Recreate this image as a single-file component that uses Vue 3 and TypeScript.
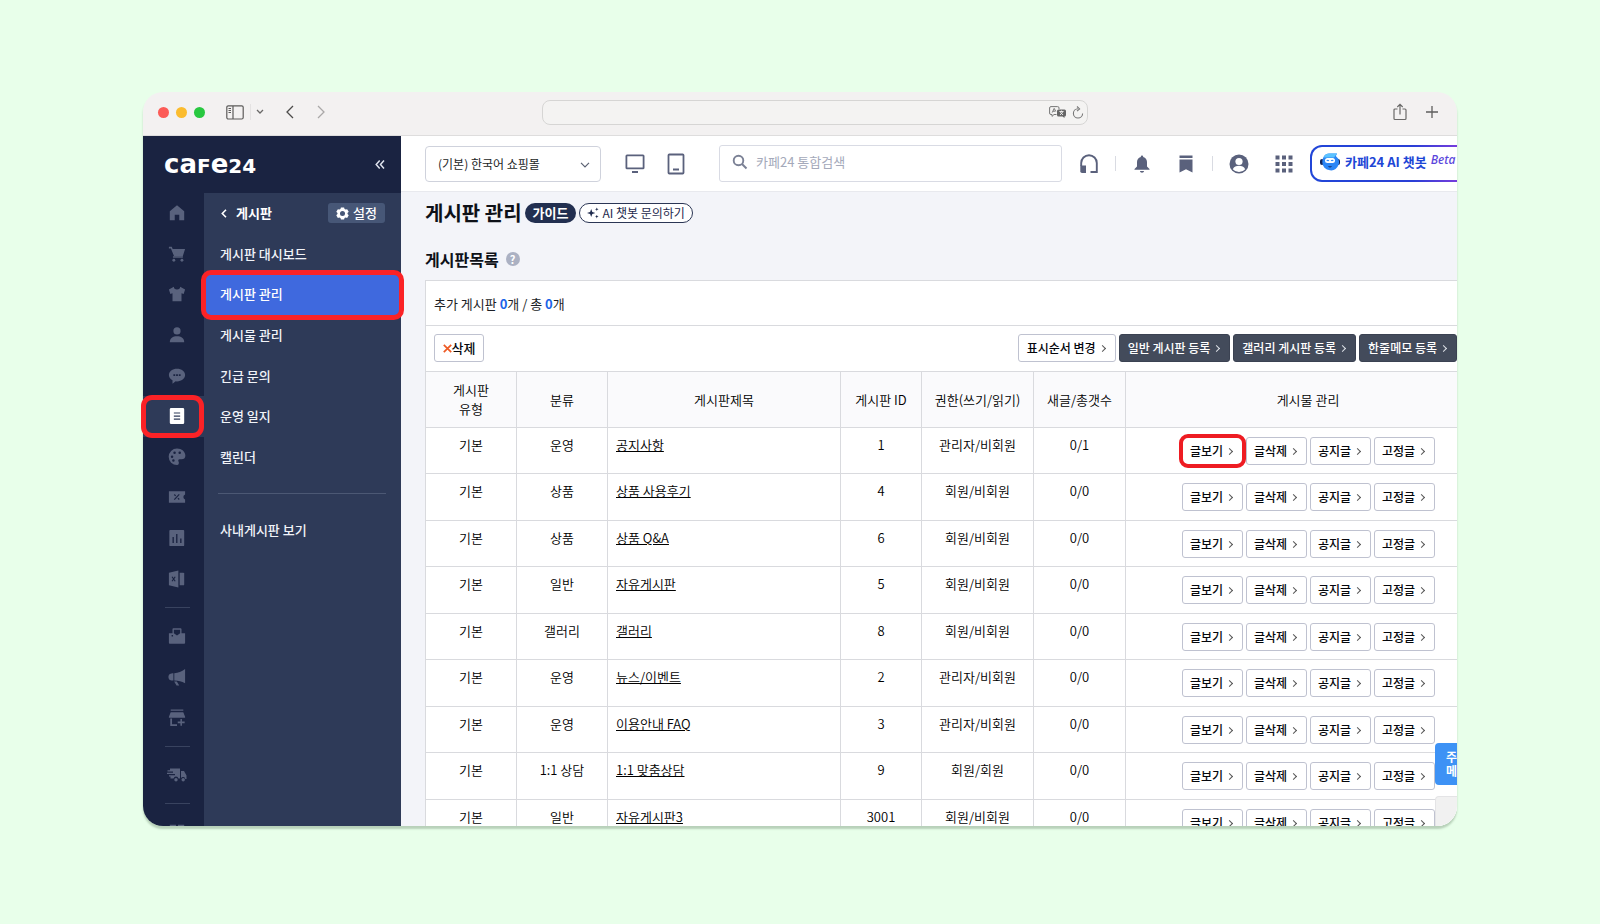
<script setup lang="ts">
import { ref } from 'vue'

interface Board {
  id: string
  kind: string
  group: string
  title: string
  auth: string
  count: string
}

const railMain = ['home', 'cart', 'shirt', 'user', 'chat', 'board', 'palette', 'coupon', 'chart', 'excel']
const railNames: Record<string, string> = {
  home: '홈', cart: '주문', shirt: '상품', user: '고객', chat: '메시지', board: '게시판',
  palette: '디자인', coupon: '프로모션', chart: '통계', excel: '엑셀', bag: '통합', mega: '마케팅',
  store: '스토어', truck: '배송', apps: '앱',
}
const railExtra = ['bag', 'mega', 'store']
const menu = ['게시판 대시보드', '게시판 관리', '게시물 관리', '긴급 문의', '운영 일지', '캘린더']
const activeMenu = '게시판 관리'
const actions = ['글보기', '글삭제', '공지글', '고정글']
const registers = ['일반 게시판 등록', '갤러리 게시판 등록', '한줄메모 등록']
const keyword = ref('')

const boards: Board[] = [
  { id: '1', kind: '기본', group: '운영', title: '공지사항', auth: '관리자/비회원', count: '0/1' },
  { id: '4', kind: '기본', group: '상품', title: '상품 사용후기', auth: '회원/비회원', count: '0/0' },
  { id: '6', kind: '기본', group: '상품', title: '상품 Q&A', auth: '회원/비회원', count: '0/0' },
  { id: '5', kind: '기본', group: '일반', title: '자유게시판', auth: '회원/비회원', count: '0/0' },
  { id: '8', kind: '기본', group: '갤러리', title: '갤러리', auth: '회원/비회원', count: '0/0' },
  { id: '2', kind: '기본', group: '운영', title: '뉴스/이벤트', auth: '관리자/비회원', count: '0/0' },
  { id: '3', kind: '기본', group: '운영', title: '이용안내 FAQ', auth: '관리자/비회원', count: '0/0' },
  { id: '9', kind: '기본', group: '1:1 상담', title: '1:1 맞춤상담', auth: '회원/회원', count: '0/0' },
  { id: '3001', kind: '기본', group: '일반', title: '자유게시판3', auth: '회원/비회원', count: '0/0' },
]

const glyphs: Record<string, string> = {
  home: '<path d="M10 1.5 18 8v10h-5.5v-6h-5v6H2V8z"/>',
  cart: '<path d="M1 2h3.2l1 2.4H19l-2.6 8.1H6.8L3.2 4H1z"/><path d="M5.5 12.5h11v1.6h-11z"/><circle cx="6.5" cy="17" r="1.6"/><circle cx="15.5" cy="17" r="1.6"/>',
  shirt: '<path d="M6.5 2 1 5l1.6 5L5 9.2V18h10V9.200l2.400.800L19 5l-5.500-3a3.500 3 0 0 1-7 0z"/>',
  user: '<circle cx="10" cy="5.500" r="4"/><path d="M2 18c0-4.500 3.500-6.500 8-6.500s8 2 8 6.500z"/>',
  chat: '<path fill-rule="evenodd" d="M10 2c5 0 9 3 9 7s-4 7-9 7l-1.500-.1L5 18.500v-3.700C2.500 13.600 1 11.500 1 9c0-4 4-7 9-7zM6 8v2h2V8zm3 0v2h2V8zm3 0v2h2V8z"/>',
  board: '<path fill-rule="evenodd" d="M3.500 1h13A1.500 1.500 0 0 1 18 2.500v15a1.500 1.500 0 0 1-1.500 1.500h-13A1.500 1.500 0 0 1 2 17.500v-15A1.500 1.500 0 0 1 3.500 1zM6.500 6v1.300h7V6zm0 3.400v1.300h7V9.400zm0 3.400v1.300h7v-1.300z"/>',
  palette: '<path fill-rule="evenodd" d="M10 .5c5.300 0 9.300 3.600 9.300 8 0 2.500-1.800 4-4.200 4h-2.200c-1.500 0-1.800 1.500-1.200 2.500.8 1.400.4 4-1.700 4a9.200 9.200 0 0 1 0-18.500zM4.500 8.200a1.400 1.400 0 1 0 0 2.800 1.400 1.400 0 0 0 0-2.800zM7.300 3.800a1.400 1.400 0 1 0 0 2.800 1.400 1.400 0 0 0 0-2.800zm5.700 0a1.400 1.400 0 1 0 0 2.800 1.400 1.400 0 0 0 0-2.800zM6 12.500a1.400 1.400 0 1 0 0 2.800 1.400 1.400 0 0 0 0-2.800z"/>',
  coupon: '<path d="M1 3.500h18v3.700a3 3 0 0 0 0 5.600v3.700H1z"/><g stroke="#1a2341" stroke-width="1.300" fill="none"><path d="m7 13 5.500-6M7 7.200l1.500 1.500M11 11.300l1.500 1.500"/></g>',
  chart: '<path fill-rule="evenodd" d="M2.500 1h14.500A1 1 0 0 1 18 2v16a1 1 0 0 1-1 1H2.500a1 1 0 0 1-1-1V2a1 1 0 0 1 1-1zM5 9v6.500h1.500V9zm4-3.500v10h1.500v-10zm4.500 5v5H15v-5z"/>',
  excel: '<path d="m1 3 10.500-2.500v19L1 17z"/><path d="M13 3h4a1 1 0 0 1 1 1v12a1 1 0 0 1-1 1h-4z"/><path d="m4.500 7.500 3.500 5m0-5-3.500 5" stroke="#1a2341" stroke-width="1.300"/>',
  bag: '<path fill-rule="evenodd" d="M6 1.500h8a1 1 0 0 1 1 1V7h4v10.500a1 1 0 0 1-1 1H2a1 1 0 0 1-1-1V7h4V2.500a1 1 0 0 1 1-1zM6.500 3v4L10 9.500 13.500 7V3zM4 9v1.600h1.600V9z"/>',
  mega: '<path d="M6 5.700v8.300c-3 0-5.500-1-5.500-4.100S3 5.700 6 5.700zM7 5.700c4.500-.200 8-1.700 12-4.700v16c-4-2-7-3-12-3zM6.800 15h3l2.700 4.500h-3z"/>',
  store: '<path d="M3 .500h14V2H3zM3 3.500h14l2 5v1.200H1V8.500zM2.500 10.500h2V17H10v2H2.500z"/><path d="M13.800 11h1.700v3H18.500v1.700h-3v3h-1.700v-3h-3v-1.700h3z"/>',
  truck: '<path d="M3 3.500h10v10h-1.500a2.600 2.600 0 0 0-5 0H3.500v-2H2v-1.200h6V9H0V7.800h6V6.500H.500V5.300H3zM14 6h3l2.500 4.500v3.500h-1.200a2.300 2.300 0 0 0-4.300-.700z"/><circle cx="9" cy="14.800" r="1.700"/><circle cx="16.200" cy="14.800" r="1.700"/>',
  apps: '<path d="M2 2h7v7H2zM11 2h7v7h-7z"/>',
}
</script>

<template>
  <div class="stage">
    <div class="frame">
      <div class="window">
        <header class="chrome">
          <div class="chrome-left">
            <span class="dot red"></span><span class="dot yellow"></span><span class="dot green"></span>
            <svg class="panes" width="18" height="15" viewBox="0 0 18 15" fill="none" stroke="#5c5b5a" stroke-width="1.200"><rect x=".8" y=".8" width="16.400" height="13.200" rx="1.500" /><path d="M7 1v13M2.500 3.500h2.500M2.500 5.500h2.500M2.500 7.500h2.500" /></svg>
            <span class="chrome-rule"></span>
            <svg class="mini" width="8" height="6" viewBox="0 0 8 6" fill="none" stroke="#6a6968" stroke-width="1.300"><path d="m1 1 3 3 3-3" /></svg>
            <button class="plain back" aria-label="뒤로"><svg width="9" height="14" viewBox="0 0 9 14" fill="none" stroke="#4c4b4a" stroke-width="1.300"><path d="M8 1 2 7l6 6" /></svg></button>
            <button class="plain next" aria-label="앞으로"><svg width="9" height="14" viewBox="0 0 9 14" fill="none" stroke="#aaa8a8" stroke-width="1.300"><path d="m1 1 6 6-6 6" /></svg></button>
          </div>
          <div class="address">
            <svg width="18" height="13" viewBox="0 0 18 13"><path d="M2 .6h6.500A1.400 1.400 0 0 1 10 2v1M7.500 8.500H5L3 10.400V8.500H2A1.400 1.400 0 0 1 .6 7V2A1.400 1.400 0 0 1 2 .6M3.200 6.600l2-4.200 1.600 3M4 5.200h2.300" fill="none" stroke="#777" /><path d="M9.500 3.500h6A1.500 1.500 0 0 1 17 5v4a1.500 1.500 0 0 1-1.500 1.500V12l-2-1.500h-4A1.500 1.500 0 0 1 8 9V5a1.500 1.500 0 0 1 1.500-1.500z" fill="#666" /><path d="M10.500 5.500h4M12.500 4.500v1M11 9l3-3.300M11 5.700 14 9" stroke="#f3f2f1" stroke-width=".9" /></svg>
            <svg width="12" height="13" viewBox="0 0 12 13" fill="none" stroke="#777" stroke-width="1.100"><path d="M6 2.800a4.600 4.600 0 1 0 4.600 4.600M5 .5l2.600 2.400L5 5.200" /></svg>
          </div>
          <div class="chrome-right">
            <button class="plain" aria-label="공유"><svg width="14" height="18" viewBox="0 0 14 18" fill="none" stroke="#6a6968" stroke-width="1.200"><path d="M4.500 6H2A1 1 0 0 0 1 7v8.500a1 1 0 0 0 1 1h10a1 1 0 0 0 1-1V7a1 1 0 0 0-1-1H9.500M7 11.500V1.500M4.300 4 7 1.300 9.700 4" /></svg></button>
            <button class="plain" aria-label="새 탭"><svg width="12" height="12" viewBox="0 0 12 12" stroke="#5f5e5d" stroke-width="1.300"><path d="M6 0v12M0 6h12" /></svg></button>
          </div>
        </header>

        <div class="app">
          <aside class="side">
            <div class="brand">
              <a class="logo" href="#"><span>ca</span><span class="low">f</span><span>e</span><span class="low">24</span></a>
              <button class="plain" aria-label="메뉴 접기"><svg width="10" height="9" viewBox="0 0 10 9" fill="none" stroke="#dfe3ee" stroke-width="1.500"><path d="M4.700.6 1.200 4.500l3.500 3.900M9 .6 5.500 4.500 9 8.400" /></svg></button>
            </div>
            <div class="side-body">
              <nav class="rail" aria-label="주 메뉴">
                <div class="rail-ten">
                  <a v-for="n in railMain" :key="n" href="#" :class="{ on: n === 'board' }" :aria-label="railNames[n]"><svg width="18" height="18" viewBox="0 0 20 20" fill="currentColor" v-html="glyphs[n]"></svg></a>
                </div>
                <hr />
                <div class="rail-three">
                  <a v-for="n in railExtra" :key="n" href="#" :aria-label="railNames[n]"><svg width="18" height="18" viewBox="0 0 20 20" fill="currentColor" v-html="glyphs[n]"></svg></a>
                </div>
                <hr />
                <a class="solo" href="#" aria-label="배송"><svg width="20" height="20" viewBox="0 0 20 20" fill="currentColor" v-html="glyphs.truck"></svg></a>
                <hr />
                <a class="solo" href="#" aria-label="앱"><svg width="18" height="18" viewBox="0 0 20 20" fill="currentColor" v-html="glyphs.apps"></svg></a>
              </nav>
              <nav class="sub" aria-label="게시판">
                <div class="sub-list">
                  <div class="sub-head">
                    <a href="#"><svg width="6" height="9" viewBox="0 0 6 9" fill="none" stroke="#fff" stroke-width="1.600"><path d="M5 .8 1.300 4.500 5 8.200" /></svg>게시판</a>
                    <button class="setting"><svg width="13" height="13" viewBox="0 0 14 14"><path fill="#fff" fill-rule="evenodd" d="M5.300.5h3.400l.5 1.700 1.100.6 1.700-.5 1.700 2.900-1.300 1.300v1.100l1.300 1.300-1.700 2.900-1.700-.5-1.100.6-.5 1.600H5.300l-.5-1.600-1.100-.6-1.700.5L.3 8.900l1.300-1.300V6.500L.3 5.200 2 2.300l1.700.5 1.100-.6zM7 4.300a2.700 2.700 0 1 0 0 5.400 2.700 2.700 0 0 0 0-5.400z" /></svg>설정</button>
                  </div>
                  <a v-for="m in menu" :key="m" href="#" :class="{ current: m === activeMenu }">{{ m }}</a>
                </div>
                <hr />
                <a href="#" class="inner">사내게시판 보기</a>
              </nav>
            </div>
          </aside>

          <main class="main">
            <div class="topbar">
              <div class="mall">
                <select aria-label="쇼핑몰 선택"><option>(기본) 한국어 쇼핑몰</option></select>
                <svg width="10" height="6" viewBox="0 0 10 6" fill="none" stroke="#5c6273" stroke-width="1.200"><path d="m1 .8 4 4 4-4" /></svg>
              </div>
              <button class="plain pc" aria-label="PC 쇼핑몰"><svg width="20" height="20" viewBox="0 0 20 20" fill="none" stroke="#5a617c" stroke-width="1.800"><rect x="1.400" y="1.400" width="17.200" height="13" rx=".6" /><path d="M7 18h6" /></svg></button>
              <button class="plain" aria-label="모바일 쇼핑몰"><svg width="18" height="22" viewBox="0 0 18 22" fill="none" stroke="#5a617c" stroke-width="1.800"><rect x="1.500" y="1.500" width="15" height="19" rx=".8" /><path d="M6 16.500h6" /></svg></button>
              <label class="search">
                <svg width="16" height="16" viewBox="0 0 16 16" fill="none" stroke="#7b8195" stroke-width="1.900"><circle cx="6.500" cy="6.500" r="4.800" /><path d="m10 10 4.500 4.500" /></svg>
                <input v-model="keyword" type="text" placeholder="카페24 통합검색" aria-label="카페24 통합검색" />
              </label>
              <div class="tools">
                <button class="plain" aria-label="고객센터"><svg width="20" height="20" viewBox="0 0 20 20"><path d="M2.200 12V9a7.800 7.800 0 0 1 15.600 0v9H11.500" fill="none" stroke="#5a617c" stroke-width="1.900" /><path d="M1.300 11.500H7V19H3a1.700 1.700 0 0 1-1.700-1.700z" fill="#5a617c" /></svg></button>
                <i class="bar"></i>
                <button class="plain bell" aria-label="알림"><svg width="16" height="18" viewBox="0 0 16 18" fill="#5a617c"><path d="M8 .5c.8 0 1.200.6 1.200 1.400C11.800 2.500 13 4.600 13 7v4.500l2.500 2.500v.8H.5V14L3 11.500V7c0-2.400 1.200-4.500 3.800-5.100C6.800 1.100 7.200.5 8 .5zM6 16h4c0 1-.9 1.700-2 1.700S6 17 6 16z" /></svg></button>
                <button class="plain mark" aria-label="즐겨찾기"><svg width="14" height="18" viewBox="0 0 14 18" fill="#5a617c"><path d="M.5.500h13V3H.5zM.5 4.500h13v13L7 14.200.5 17.500z" /></svg></button>
                <i class="bar"></i>
                <button class="plain me" aria-label="내 정보"><svg width="20" height="20" viewBox="0 0 20 20"><circle cx="10" cy="10" r="9.500" fill="#5a617c" /><circle cx="10" cy="7.500" r="3.600" fill="#fff" /><path d="M3.800 15.200c1.200-2.400 3.500-3.400 6.200-3.400s5 1 6.200 3.400A8 8 0 0 1 10 18a8 8 0 0 1-6.200-2.800z" fill="#fff" /></svg></button>
                <button class="plain nine" aria-label="전체 서비스"><svg width="18" height="18" viewBox="0 0 18 18" fill="#5a617c"><path d="M.5.500h4v4h-4zM7 .500h4v4H7zM13.500.500h4v4h-4zM.5 7h4v4h-4zM7 7h4v4H7zM13.500 7h4v4h-4zM.5 13.500h4v4h-4zM7 13.500h4v4H7zM13.500 13.500h4v4h-4z" /></svg></button>
              </div>
              <button class="bot">
                <svg width="20" height="18" viewBox="0 0 20 18"><rect x="0" y="6" width="4" height="6" rx="2" fill="#14265c" /><rect x="16" y="6" width="4" height="6" rx="2" fill="#14265c" /><path d="M5 2C8-.5 13 1 17 .5c-.5 1.500-1 2-1.200 2.500A8 8 0 0 1 10 17.300 8 8 0 0 1 2.300 9C2.300 6 3.500 3.500 5 2z" fill="#2c86f5" /><path d="M5 2C8-.5 13 1 17 .5L14 4.500H3.500z" fill="#5cc3ff" /><rect x="5" y="5" width="10" height="5" rx="2.500" fill="#fff" /><path d="M6.800 8q1-1.600 2 0M11.200 8q1-1.600 2 0" stroke="#2c86f5" stroke-width="1.100" fill="none" /><path d="M8.500 13.500q1.500 1 3 0" stroke="#14265c" fill="none" /></svg>
                <b>카페24 AI 챗봇</b><em>Beta</em>
              </button>
            </div>

            <div class="content">
              <div class="heading">
                <h1>게시판 관리</h1>
                <a class="guide" href="#">가이드</a>
                <a class="ask" href="#"><svg width="12" height="12" viewBox="0 0 12 12" fill="#1e2a4d"><path d="M4.200 2l1.100 2.900L8.400 6 5.300 7.100 4.200 10 3.100 7.100 0 6l3.100-1.100zM9.800.5l.5 1.300 1.300.5-1.300.5-.5 1.200-.5-1.200L8 2.300l1.300-.5zM9.800 7.800l.5 1.300 1.300.5-1.300.5-.5 1.300-.5-1.300L8 9.600l1.300-.5z" /></svg>AI 챗봇 문의하기</a>
              </div>
              <div class="caption">
                <h2>게시판목록</h2>
                <button class="help" aria-label="도움말">?</button>
              </div>

              <section class="panel">
                <p class="summary">추가 게시판 <b>0</b>개 / 총 <b>0</b>개</p>
                <div class="toolbar">
                  <button class="btn del"><svg width="9" height="9" viewBox="0 0 9 9" stroke="#ee5a24" stroke-width="1.700"><path d="m.8.8 7.400 7.400M8.200.8.8 8.200" /></svg>삭제</button>
                  <span class="spring"></span>
                  <button class="btn">표시순서 변경<i class="arrow"></i></button>
                  <button v-for="r in registers" :key="r" class="btn dark">{{ r }}<i class="arrow"></i></button>
                </div>
                <table>
                  <colgroup><col class="c1" /><col class="c1" /><col /><col class="c4" /><col class="c5" /><col class="c6" /><col class="c7" /></colgroup>
                  <thead>
                    <tr><th>게시판<br />유형</th><th>분류</th><th>게시판제목</th><th>게시판 ID</th><th>권한(쓰기/읽기)</th><th>새글/총갯수</th><th>게시물 관리</th></tr>
                  </thead>
                  <tbody>
                    <tr v-for="(b, i) in boards" :key="b.id">
                      <td>{{ b.kind }}</td><td>{{ b.group }}</td>
                      <td class="name"><a href="#">{{ b.title }}</a></td>
                      <td>{{ b.id }}</td><td>{{ b.auth }}</td><td>{{ b.count }}</td>
                      <td class="ops">
                        <div><button v-for="(a, j) in actions" :key="a" class="btn" :class="{ focus: i === 0 && j === 0 }">{{ a }}<i class="arrow"></i></button></div>
                      </td>
                    </tr>
                  </tbody>
                </table>
              </section>
            </div>
            <button class="float-menu">주<br />메</button>
            <div class="float-box"></div>
          </main>
        </div>
      </div>
      <span class="rail-ring"></span>
    </div>
  </div>
</template>

<style>
body { margin: 0; }
</style>

<style scoped>
.stage, .stage * { box-sizing: border-box; }
.stage {
  height: 100vh; display: flex; padding: 92px 143px 98px; background: #e8ffea; color: #1b1e26;
  font-family: "Noto Sans CJK KR", "Noto Sans", sans-serif; font-size: 13px; line-height: 20px; overflow: hidden;
}
button, input, select { font: inherit; color: inherit; }
button { padding: 0; cursor: pointer; white-space: nowrap; }
a { color: inherit; text-decoration: none; }
svg { display: block; flex: none; }
.plain { border: 0; background: none; display: flex; align-items: center; }
.frame { position: relative; flex: 1; min-width: 0; display: flex; }
.window {
  flex: 1; min-width: 0; display: flex; flex-direction: column; overflow: hidden; border-radius: 20px;
  box-shadow: 0 3px 2px rgba(60, 90, 60, .28);
}
.chrome {
  flex: none; height: 44px; display: grid; grid-template-columns: 399fr 546fr 369fr; align-items: center;
  padding-bottom: 3px; background: #f3f1f1; border-bottom: 1px solid #dedddd;
}
.chrome-left { display: flex; align-items: center; padding-left: 15px; }
.dot { width: 11px; height: 11px; border-radius: 50%; margin-right: 7px; }
.red { background: #fc5b57; }
.yellow { background: #fbbc2e; }
.green { background: #28c840; }
.panes { margin-left: 14px; }
.chrome-rule { width: 1px; height: 16px; margin-left: 6px; background: #e4e2e2; }
.mini { margin-left: 5px; }
.back { margin-left: 21px; }
.next { margin-left: 23px; }
.address {
  height: 25px; display: flex; align-items: center; justify-content: flex-end; gap: 5px; padding-right: 3px;
  border: 1px solid #d6d5d4; border-radius: 8px; background: #f4f3f2;
}
.chrome-right { display: flex; justify-content: flex-end; align-items: center; gap: 19px; padding-right: 19px; }

.app { flex: 1; min-height: 0; display: flex; }
.side { flex: none; width: 258px; display: flex; flex-direction: column; background: #1a2341; position: relative; z-index: 2; }
.brand { flex: none; height: 57px; display: flex; align-items: center; justify-content: space-between; padding: 0 16px 0 21px; }
.logo { display: flex; align-items: baseline; color: #fff; font: 700 26px/28px "DejaVu Sans", sans-serif; }
.logo .low { font-size: 20px; text-transform: uppercase; }
.side-body { flex: 1; min-height: 0; display: flex; }
.rail { flex: none; width: 61px; overflow: hidden; color: #59627d; }
.rail a { display: flex; align-items: center; justify-content: center; padding-left: 6px; }
.rail-ten { height: 406px; display: grid; grid-auto-rows: 1fr; }
.rail-three { height: 122px; display: grid; grid-auto-rows: 1fr; }
.rail .on { background: #2e3a58; color: #fff; }
.rail hr { width: 25px; height: 1px; margin: 8px 14px 8px 22px; border: 0; background: #39435f; }
.solo { height: 40px; }
.sub { flex: 1; background: #2e3a58; color: #f1f3f8; font-weight: 500; }
.sub-list { height: 284px; display: grid; grid-auto-rows: 1fr; }
.sub-list > a { display: flex; align-items: center; padding-left: 16px; }
.sub-head { display: flex; align-items: center; justify-content: space-between; padding: 0 16px 0 17px; }
.sub-head a { display: flex; align-items: center; gap: 9px; font-weight: 700; color: #fff; }
.setting { display: flex; align-items: center; justify-content: center; gap: 4px; width: 57px; height: 20px; border: 0; border-radius: 3px; background: #475777; color: #fff; }
.sub-list .current { position: relative; background: #3f69de; color: #fff; }
.current::after { content: ""; position: absolute; inset: -4px -3px -5px -3px; border: 5px solid #fb2226; border-radius: 10px; }
.sub hr { height: 1px; margin: 16px 15px 0 14px; border: 0; background: #4c5874; }
.inner { display: block; padding: 26px 0 0 16px; }
.rail-ring { position: absolute; left: -2px; top: 303px; width: 63px; height: 43px; border: 5px solid #fb2226; border-radius: 11px; z-index: 3; }

.main { flex: 1; min-width: 0; position: relative; overflow: hidden; background: #f3f4f9; }
.topbar { height: 56px; display: flex; align-items: center; padding-left: 24px; background: #fff; border-bottom: 1px solid #e8e9ee; }
.mall { position: relative; flex: none; width: 176px; }
.mall select { width: 100%; height: 36px; padding: 0 28px 0 12px; appearance: none; border: 1px solid #cfd2dc; border-radius: 4px; background: #fff; font-size: 12px; }
.mall svg { position: absolute; right: 11px; top: 16px; pointer-events: none; }
.pc { margin: 0 22px 0 24px; }
.search { flex: 1; min-width: 0; height: 37px; margin-left: 34px; display: flex; align-items: center; gap: 8px; padding: 0 12px 3px; border: 1px solid #d9dbe4; border-radius: 3px; }
.search input { flex: 1; min-width: 0; border: 0; outline: 0; padding: 0; background: none; }
.search input::placeholder { color: #a4a9ba; opacity: 1; }
.tools { flex: none; display: flex; align-items: center; margin: 0 17px; }
.bar { width: 1px; height: 15px; margin-left: 16px; background: #d9dbe2; }
.bell { margin-left: 18px; }
.mark { margin-left: 29px; }
.mark + .bar { margin-left: 19px; }
.me { margin-left: 16px; }
.nine { margin-left: 26px; }
.bot {
  flex: none; width: 172px; height: 37px; margin-right: -25px; display: flex; align-items: center; padding: 0 0 4px 8px;
  border: 2px solid transparent; border-radius: 12px;
  background: linear-gradient(#fff, #fff) padding-box, linear-gradient(90deg, #2146d8, #2a3fd6 60%, #a23be0) border-box;
}
.bot b { margin-left: 5px; color: #1d46d6; }
.bot em { margin: -4px 0 0 4px; font: italic 500 12px/16px "Noto Sans", sans-serif; color: #5a45dc; }

.content { padding: 10px 0 0 24px; }
.heading { display: flex; align-items: center; height: 22px; }
h1, h2, p { margin: 0; }
h1 { font-size: 20px; line-height: 22px; color: #0e1118; }
.guide { height: 20px; margin-left: 3px; padding: 0 8px; border-radius: 10px; background: #222f50; color: #fff; font-weight: 700; line-height: 19px; }
.ask { display: flex; align-items: center; gap: 3px; height: 20px; margin-left: 3px; padding: 0 7px; border: 1px solid #2b3655; border-radius: 10px; background: #fff; color: #1e2a4d; font-size: 12px; }
.caption { display: flex; align-items: center; gap: 7px; margin-top: 23px; height: 24px; }
h2 { font-size: 16px; line-height: 24px; color: #0e1118; }
.help { width: 14px; height: 14px; border: 0; border-radius: 50%; background: #abb1c3; color: #fff; font-size: 11px; font-weight: 700; line-height: 14px; }
.panel { margin: 9px -34px 0 0; border: 1px solid #d9dade; background: #fff; }
.summary { height: 45px; padding: 13px 8px 0; line-height: 20px; border-bottom: 1px solid #d9dade; }
.summary b { color: #1b64e8; }
.toolbar { display: flex; gap: 3px; padding: 8px 33px 9px 8px; }
.spring { flex: 1; }
.btn { display: inline-flex; align-items: center; justify-content: center; gap: 4px; height: 28px; padding: 0 8px; border: 1px solid #bfc2d0; border-radius: 3px; background: #fff; color: #05070c; font-size: 12px; font-weight: 500; }
.btn.del { width: 50px; gap: 0; padding: 0; font-size: 13px; }
.dark { background: #434b5b; border-color: #3b4252; color: #fff; }
.arrow { flex: none; width: 5px; height: 5px; margin-right: 2px; border: solid #555; border-width: 1px 1px 0 0; transform: rotate(45deg); }
.dark .arrow { border-color: #dfe2e8; }
table { width: 100%; table-layout: fixed; border-spacing: 0; border-collapse: separate; }
.c1 { width: 91px; }
.c4 { width: 81px; }
.c5 { width: 112px; }
.c6 { width: 92px; }
.c7 { width: 364px; }
th, td { padding: 0; border: solid #d9dade; border-width: 1px 1px 0 0; text-align: center; }
th:last-child, td:last-child { border-right: 0; }
th { height: 56px; padding-bottom: 1px; background: #fafafc; font-weight: 350; line-height: 19px; color: #000; }
td { height: 46px; padding-top: 7px; vertical-align: top; font-weight: 350; color: #000; }
tbody tr:nth-child(even) td { height: 47px; }
.name { padding-left: 8px; text-align: left; }
.name a { text-decoration: underline; text-underline-offset: 1px; }
.ops div { display: flex; justify-content: center; gap: 3px; padding-top: 2px; }
.ops .btn { width: 61px; position: relative; }
.focus::after { content: ""; position: absolute; inset: -4px; border: 4px solid #ee1c22; border-radius: 9px; }
.float-menu { position: absolute; right: -15px; bottom: 41px; width: 37px; height: 42px; padding: 0 0 0 11px; border: 0; border-radius: 4px; background: #3d92f5; color: #fff; font-size: 12px; font-weight: 700; line-height: 14px; text-align: left; }
.float-box { position: absolute; right: 0; bottom: 0; width: 22px; height: 30px; border: solid #e4e4e6; border-width: 1px 0 0 1px; border-radius: 4px 0 0 0; background: #f1f1f1; }
</style>
